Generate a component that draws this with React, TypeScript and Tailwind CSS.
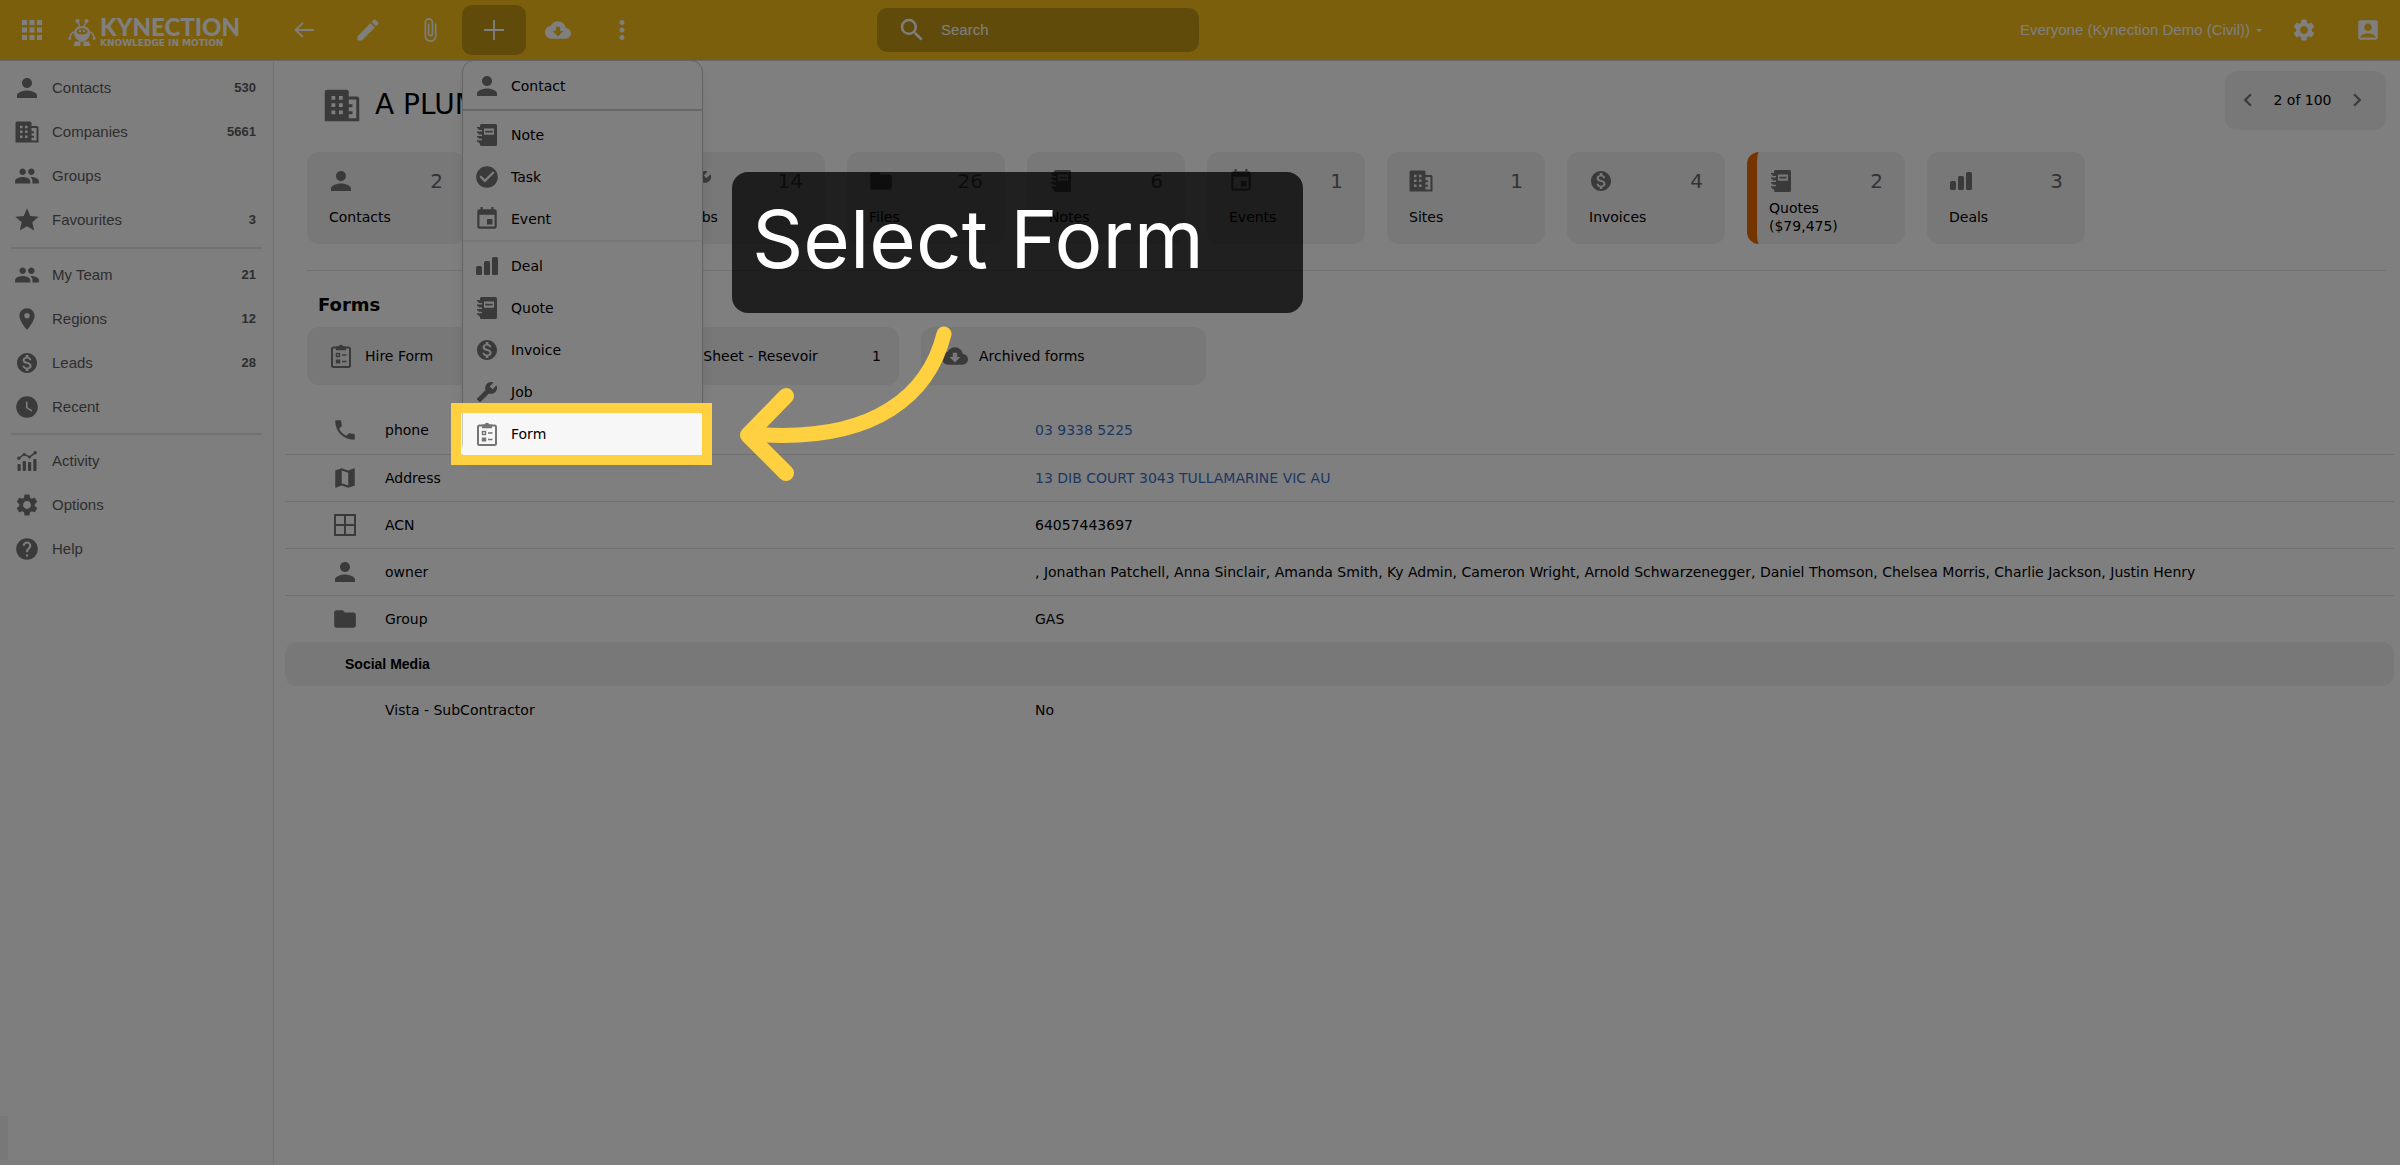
import React from "react";
import {
  MdAccountBox,
  MdApps,
  MdAttachFile,
  MdBuild,
  MdCheckCircle,
  MdChevronLeft,
  MdChevronRight,
  MdCloudDownload,
  MdEdit,
  MdEvent,
  MdFolder,
  MdGroup,
  MdHelp,
  MdMap,
  MdMonetizationOn,
  MdMoreVert,
  MdPerson,
  MdPhone,
  MdPlace,
  MdSearch,
  MdSettings,
  MdStar,
  MdWatchLater,
} from "react-icons/md";

interface IconProps {
  className?: string;
}

interface Item {
  label: string;
  icon: React.ReactNode;
  count?: string;
}

interface Row {
  label: string;
  icon: React.ReactNode;
  value: string;
  href?: string;
}

function BuildingIcon({ className }: IconProps) {
  return (
    <svg viewBox="0 0 24 22" fill="currentColor" fillRule="evenodd" className={className} aria-hidden="true">
      <path d="M2 0.500h13a1.500 1.500 0 0 1 1.500 1.500V5h5.500a1.500 1.500 0 0 1 1.500 1.500V21.500H.5V2A1.500 1.500 0 0 1 2 0.500zM5 4.700v2.500h2.500V4.700zM10 4.700v2.500h2.500V4.700zM5 9.500V12h2.500V9.500zM10 9.500V12h2.500V9.500zM5 14.400v2.500h2.500v-2.500zM10 14.400v2.500h2.500v-2.500zM16.500 7v3.200h2.500v2h-2.500v2.600h2.500v2h-2.500v2.700h5V7z" />
    </svg>
  );
}

function NotebookIcon({ className }: IconProps) {
  return (
    <svg viewBox="0 0 20 22" fill="currentColor" fillRule="evenodd" className={className} aria-hidden="true">
      <path d="M4.500 0H18.500A1.500 1.500 0 0 1 20 1.500v19a1.500 1.500 0 0 1-1.500 1.500H4.500A1.500 1.500 0 0 1 3 20.500V19.200H1.500v-1.400H0v-1.500h5v-1.500H1.500v-1.400H0v-1.500h5v-1.500H1.500V9H0V7.500h5V6H1.500V4.600H0V3.100h3V1.500A1.500 1.500 0 0 1 4.500 0zM7 4.500v6.200h10V4.500zM8.300 6.800h7.400v1.600H8.300z" />
    </svg>
  );
}

function BarsIcon({ className }: IconProps) {
  return (
    <svg viewBox="0 0 22 18" fill="currentColor" className={className} aria-hidden="true">
      <rect x="0" y="9" width="6" height="9" rx="1.500" />
      <rect x="8" y="4" width="6" height="14" rx="1.500" />
      <rect x="16" y="0" width="6" height="18" rx="1.500" />
    </svg>
  );
}

function ActivityIcon({ className }: IconProps) {
  return (
    <svg viewBox="0 0 20 20" fill="currentColor" className={className} aria-hidden="true">
      <rect x="0.500" y="13" width="3.200" height="7" rx="0.800" />
      <rect x="5.700" y="10" width="3.200" height="10" rx="0.800" />
      <rect x="11" y="11" width="3.200" height="9" rx="0.800" />
      <rect x="16.300" y="8" width="3.200" height="12" rx="0.800" />
      <path d="M1.800 7.500 7.200 3.200l5.300 3L18 1.800" fill="none" stroke="currentColor" strokeWidth="1.500" />
      <circle cx="1.800" cy="7.300" r="1.700" />
      <circle cx="7.200" cy="3.500" r="1.500" />
      <circle cx="12.500" cy="6" r="1.500" />
      <circle cx="18.200" cy="1.700" r="1.700" />
    </svg>
  );
}

function ChecklistIcon({ className }: IconProps) {
  return (
    <svg viewBox="0 0 20 24" fill="none" stroke="currentColor" className={className} aria-hidden="true">
      <rect x="1" y="3.500" width="18" height="19.500" rx="1.500" strokeWidth="2" />
      <path d="M5 2.500h2.600a2.500 2.500 0 0 1 4.800 0H15V6.200H5z" fill="currentColor" stroke="none" />
      <rect x="5.500" y="9.500" width="3" height="3" strokeWidth="1.400" />
      <rect x="4.800" y="15.500" width="4.400" height="4" fill="currentColor" stroke="none" />
      <path d="M11 11h4.500M11 17.500h4.500" strokeWidth="1.500" />
    </svg>
  );
}

function WindowIcon({ className }: IconProps) {
  return (
    <svg viewBox="0 0 22 22" fill="none" stroke="currentColor" strokeWidth="2" className={className} aria-hidden="true">
      <path d="M1 1h20v20H1zM11 1v20M1 11h20" />
    </svg>
  );
}

function RobotLogo({ className }: IconProps) {
  return (
    <svg viewBox="0 0 28 28" fill="currentColor" className={className} aria-hidden="true">
      <circle cx="9.500" cy="3" r="2.100" />
      <circle cx="18.500" cy="3" r="2.100" />
      <path d="M10 4l2 5M18 4l-2 5M6 14c-3 1-4 3-4 6M22 14c3 1 4 3 4 6" fill="none" stroke="currentColor" strokeWidth="1.500" />
      <path d="M14 8c5 0 8 3 8 7 0 5-4 8-8 9-4-1-8-4-8-9 0-4 3-7 8-7z" />
      <path d="M8.500 13.500c0-2 2-3.300 5.500-3.300s5.500 1.300 5.500 3.300-2 3-5.500 3-5.500-1-5.500-3z" fill="#f6be18" />
      <circle cx="12" cy="13" r="1.200" />
      <circle cx="16" cy="13" r="1.200" />
      <path d="M7 23.500h5.500V28H5.500zM21 23.500h-5.500V28h7z" />
      <circle cx="1.800" cy="20.500" r="1.400" />
      <circle cx="26.200" cy="20.500" r="1.400" />
    </svg>
  );
}

const sidebar: Item[][] = [
  [
    { label: "Contacts", icon: <MdPerson className="size-[30px]" />, count: "530" },
    { label: "Companies", icon: <BuildingIcon className="w-6" />, count: "5661" },
    { label: "Groups", icon: <MdGroup className="size-[26px]" /> },
    { label: "Favourites", icon: <MdStar className="size-7" />, count: "3" },
  ],
  [
    { label: "My Team", icon: <MdGroup className="size-[26px]" />, count: "21" },
    { label: "Regions", icon: <MdPlace className="size-[26px]" />, count: "12" },
    { label: "Leads", icon: <MdMonetizationOn className="size-6" />, count: "28" },
    { label: "Recent", icon: <MdWatchLater className="size-[26px]" /> },
  ],
  [
    { label: "Activity", icon: <ActivityIcon className="w-5" /> },
    { label: "Options", icon: <MdSettings className="size-[26px]" /> },
    { label: "Help", icon: <MdHelp className="size-[26px]" /> },
  ],
];

const stats: Item[] = [
  { label: "Contacts", icon: <MdPerson className="size-[30px]" />, count: "2" },
  { label: "Tasks", icon: <MdCheckCircle className="size-[26px]" />, count: "5" },
  { label: "Jobs", icon: <MdBuild className="size-[22px] -scale-x-100" />, count: "14" },
  { label: "Files", icon: <MdFolder className="size-[26px]" />, count: "26" },
  { label: "Notes", icon: <NotebookIcon className="w-5" />, count: "6" },
  { label: "Events", icon: <MdEvent className="size-[26px]" />, count: "1" },
  { label: "Sites", icon: <BuildingIcon className="w-6" />, count: "1" },
  { label: "Invoices", icon: <MdMonetizationOn className="size-6" />, count: "4" },
  { label: "Quotes ($79,475)", icon: <NotebookIcon className="w-5" />, count: "2" },
  { label: "Deals", icon: <BarsIcon className="w-[22px]" />, count: "3" },
];

const forms: Item[] = [
  { label: "Hire Form", icon: <ChecklistIcon className="w-5" /> },
  { label: "Run Sheet - Resevoir", icon: <ChecklistIcon className="w-5" />, count: "1" },
  { label: "Archived forms", icon: <MdCloudDownload className="size-[26px]" /> },
];

const rows: Row[] = [
  { label: "phone", icon: <MdPhone className="size-[26px]" />, value: "03 9338 5225", href: "#phone" },
  { label: "Address", icon: <MdMap className="size-[26px]" />, value: "13 DIB COURT 3043 TULLAMARINE VIC AU", href: "#address" },
  { label: "ACN", icon: <WindowIcon className="w-[22px]" />, value: "64057443697" },
  {
    label: "owner",
    icon: <MdPerson className="size-[30px]" />,
    value:
      ", Jonathan Patchell, Anna Sinclair, Amanda Smith, Ky Admin, Cameron Wright, Arnold Schwarzenegger, Daniel Thomson, Chelsea Morris, Charlie Jackson, Justin Henry",
  },
  { label: "Group", icon: <MdFolder className="size-[26px]" />, value: "GAS" },
];

const menu: Item[][] = [
  [{ label: "Contact", icon: <MdPerson className="size-[30px]" /> }],
  [
    { label: "Note", icon: <NotebookIcon className="w-5" /> },
    { label: "Task", icon: <MdCheckCircle className="size-[26px]" /> },
    { label: "Event", icon: <MdEvent className="size-[26px]" /> },
  ],
  [
    { label: "Deal", icon: <BarsIcon className="w-[22px]" /> },
    { label: "Quote", icon: <NotebookIcon className="w-5" /> },
    { label: "Invoice", icon: <MdMonetizationOn className="size-6" /> },
    { label: "Job", icon: <MdBuild className="size-[22px] -scale-x-100" /> },
    { label: "Form", icon: <ChecklistIcon className="w-5" /> },
  ],
];

function AddMenu() {
  return (
    <div className="absolute left-0 top-full w-[241px] rounded-xl border border-[#c8c8c8] bg-white pt-1 font-['DejaVu_Sans',Verdana,sans-serif] shadow-lg">
      {menu.map((group, index) => (
        <ul
          key={index}
          className={index === 0 ? "" : index === 1 ? "mt-0.5 border-t-2 border-[#d0d0d0] pt-[3px]" : "border-t-2 border-[#f0f0f0] pt-[3px]"}
        >
          {group.map((item) => (
            <li key={item.label} className="relative">
              <button
                className={
                  item.label === "Form"
                    ? "flex h-[42px] w-full items-center bg-[#f7f7f7] pl-2 text-sm text-black"
                    : "flex h-[42px] w-full items-center pl-2 text-sm text-black"
                }
              >
                <span className="mr-2 flex w-8 justify-center text-[#757575]">{item.icon}</span>
                {item.label}
              </button>
              {item.label === "Form" && (
                <div className="pointer-events-none absolute -bottom-2.5 -left-3 -right-2.5 -top-2.5 border-[10px] border-[#ffd141] shadow-[0_0_0_3000px_rgba(0,0,0,0.5)]"></div>
              )}
            </li>
          ))}
        </ul>
      ))}
    </div>
  );
}

function Header() {
  return (
    <header className="relative z-20 flex h-[61px] items-stretch border-b border-[#d0d0d0] bg-[#f6be18] font-['Liberation_Sans',Arial,sans-serif] text-white">
      <div className="flex w-[270px] items-center">
        <button aria-label="Apps" className="flex w-16 justify-center">
          <MdApps className="size-[30px]" />
        </button>
        <a href="#home" className="ml-1 flex items-center gap-1">
          <RobotLogo className="mt-1 size-7" />
          <span className="flex flex-col pt-0.5">
            <span className="font-['Lato',sans-serif] text-2xl leading-6 font-black">KYNECTION</span>
            <span className="font-['DejaVu_Sans',sans-serif] text-[9px] leading-[9px] font-bold">KNOWLEDGE IN MOTION</span>
          </span>
        </a>
      </div>
      <button aria-label="Back" className="flex w-16 items-center justify-center pl-1">
        <svg viewBox="0 0 20 16" fill="none" stroke="currentColor" strokeWidth="1.800" className="w-5">
          <path d="M20 8H1.500M9 .8 1.500 8 9 15.200" />
        </svg>
      </button>
      <button aria-label="Edit" className="flex w-16 items-center justify-center pl-1">
        <MdEdit className="size-7" />
      </button>
      <button aria-label="Attach" className="flex w-16 items-center justify-center">
        <MdAttachFile className="size-[26px]" />
      </button>
      <div className="relative flex w-16 items-center">
        <button aria-label="Add" className="flex h-[50px] w-16 items-center justify-center rounded-[10px] bg-[#c09616]">
          <svg viewBox="0 0 20 20" fill="none" stroke="currentColor" strokeWidth="1.800" className="w-5">
            <path d="M10 0v20M0 10h20" />
          </svg>
        </button>
        <AddMenu />
      </div>
      <button aria-label="Download" className="flex w-16 items-center justify-center">
        <MdCloudDownload className="size-[26px]" />
      </button>
      <button aria-label="More" className="flex w-16 items-center justify-center">
        <MdMoreVert className="size-[30px]" />
      </button>
      <label className="ml-[223px] flex h-11 w-[322px] items-center self-center rounded-[10px] bg-[#c09616] pl-5">
        <MdSearch className="size-[30px]" />
        <input
          type="text"
          aria-label="Search"
          placeholder="Search"
          className="ml-3.5 min-w-0 flex-1 bg-transparent text-[15px] outline-none placeholder:text-white"
        />
      </label>
      <button className="ml-auto flex items-center gap-1.5 pr-2.5 text-[15px]">
        Everyone (Kynection Demo (Civil))
        <svg viewBox="0 0 6 3" fill="currentColor" className="w-1.5">
          <path d="M0 0h6L3 3z" />
        </svg>
      </button>
      <button aria-label="Settings" className="flex w-16 items-center justify-center">
        <MdSettings className="size-[26px]" />
      </button>
      <button aria-label="Account" className="flex w-16 items-center justify-center">
        <MdAccountBox className="size-[26px]" />
      </button>
    </header>
  );
}

function Sidebar() {
  return (
    <nav className="flex w-[274px] shrink-0 flex-col border-r border-[#e4e4e4] bg-[#fdfdfd] pt-[5px] font-['Liberation_Sans',Arial,sans-serif]">
      {sidebar.map((group, index) => (
        <ul key={index} className={index === 0 ? "mx-[11px] pb-[5px]" : "mx-[11px] border-t-2 border-[#e4e4e4] py-1"}>
          {group.map((item) => (
            <li key={item.label}>
              <a href="#list" className="flex h-11 items-center pr-1.5 text-[15px] text-[#5c5c5c]">
                <span className="mr-[9px] flex w-8 justify-center text-[#757575]">{item.icon}</span>
                {item.label}
                <span className="ml-auto text-[13px] font-bold">{item.count}</span>
              </a>
            </li>
          ))}
        </ul>
      ))}
      <div className="mt-auto mb-[5px] h-11 w-2 bg-[#f0f0f0]"></div>
    </nav>
  );
}

function Callout() {
  return (
    <>
      <div className="absolute left-[732px] top-[172px] z-30 flex h-[141px] w-[571px] items-center rounded-2xl bg-black/75 pb-2 pl-5 font-['Inter',sans-serif] text-[80px] leading-none text-white">
        Select Form
      </div>
      <svg
        viewBox="0 0 216 158"
        fill="none"
        stroke="#ffd141"
        strokeLinecap="round"
        strokeLinejoin="round"
        className="absolute left-[738px] top-[325px] z-30 w-[216px]"
        aria-hidden="true"
      >
        <path d="M206 9C192 65 142 120 12 109" strokeWidth="15" />
        <path d="M48 71 10 110l38 38" strokeWidth="16" />
      </svg>
    </>
  );
}

export default function App() {
  return (
    <div className="relative flex min-h-screen flex-col overflow-hidden bg-white font-['DejaVu_Sans',Verdana,sans-serif] text-sm text-black">
      <Header />
      <div className="flex flex-1">
        <Sidebar />
        <main className="min-w-0 flex-1 pl-[11px] pr-1.5">
          <div className="flex h-[91px] items-start justify-between pl-[39px] pr-2 pt-2.5">
            <h1 className="flex items-center gap-[15px] pt-3.5 text-[28px]">
              <BuildingIcon className="w-9 text-[#757575]" />
              A PLUMBING
            </h1>
            <div className="flex h-[59px] w-[161px] items-center justify-between rounded-xl bg-[#f0f0f0] pl-2.5 pr-4 pb-0.5">
              <button aria-label="Previous" className="text-[#757575]">
                <MdChevronLeft className="size-[26px]" />
              </button>
              2 of 100
              <button aria-label="Next" className="text-[#757575]">
                <MdChevronRight className="size-[26px]" />
              </button>
            </div>
          </div>

          <div className="ml-[22px] mr-2 flex gap-[22px] border-b border-[#e4e4e4] pb-[26px]">
            {stats.map((item, index) => (
              <a
                key={item.label}
                href="#stat"
                className={
                  index === 8
                    ? "h-[92px] w-[158px] rounded-xl border-l-[10px] border-[#ea6a00] bg-[#f0f0f0] pl-3 pr-[22px] pt-3"
                    : "h-[92px] w-[158px] rounded-xl bg-[#f0f0f0] px-[22px] pt-3"
                }
              >
                <div className="flex h-[34px] items-center justify-between text-xl text-[#666]">
                  <span className="-ml-1 flex w-8 justify-center text-[#757575]">{item.icon}</span>
                  {item.count}
                </div>
                <div className="flex h-[38px] items-center leading-[18px]">{item.label}</div>
              </a>
            ))}
          </div>

          <h2 className="mt-5 ml-[33px] text-lg font-bold">Forms</h2>
          <div className="mt-2 ml-[22px] flex gap-[22px]">
            {forms.map((item) => (
              <a key={item.label} href="#form" className="flex h-[58px] w-[285px] items-center rounded-xl bg-[#f0f0f0] pl-[18px] pr-[18px]">
                <span className="mr-2 flex w-8 justify-center text-[#757575]">{item.icon}</span>
                {item.label}
                <span className="ml-auto">{item.count}</span>
              </a>
            ))}
          </div>

          <table className="mt-[22px] w-full table-fixed border-collapse text-left">
            <colgroup>
              <col className="w-[100px]" />
              <col className="w-[650px]" />
              <col />
            </colgroup>
            <tbody>
              {rows.map((row) => (
                <tr key={row.label} className="h-[47px] border-b border-[#e0e0e0] last:border-0">
                  <td className="pl-11">
                    <span className="flex w-8 justify-center text-[#757575]">{row.icon}</span>
                  </td>
                  <th scope="row" className="font-normal">
                    {row.label}
                  </th>
                  <td>
                    {row.href ? (
                      <a href={row.href} className="text-[#3a70c4]">
                        {row.value}
                      </a>
                    ) : (
                      row.value
                    )}
                  </td>
                </tr>
              ))}
            </tbody>
          </table>
          <h3 className="flex h-11 items-center rounded-xl bg-[#f0f0f0] pl-[60px] font-['Liberation_Sans',Arial,sans-serif] font-bold">
            Social Media
          </h3>
          <dl className="flex h-[47px] items-center pl-[100px]">
            <dt className="w-[650px]">Vista - SubContractor</dt>
            <dd>No</dd>
          </dl>
        </main>
      </div>
      <Callout />
    </div>
  );
}
